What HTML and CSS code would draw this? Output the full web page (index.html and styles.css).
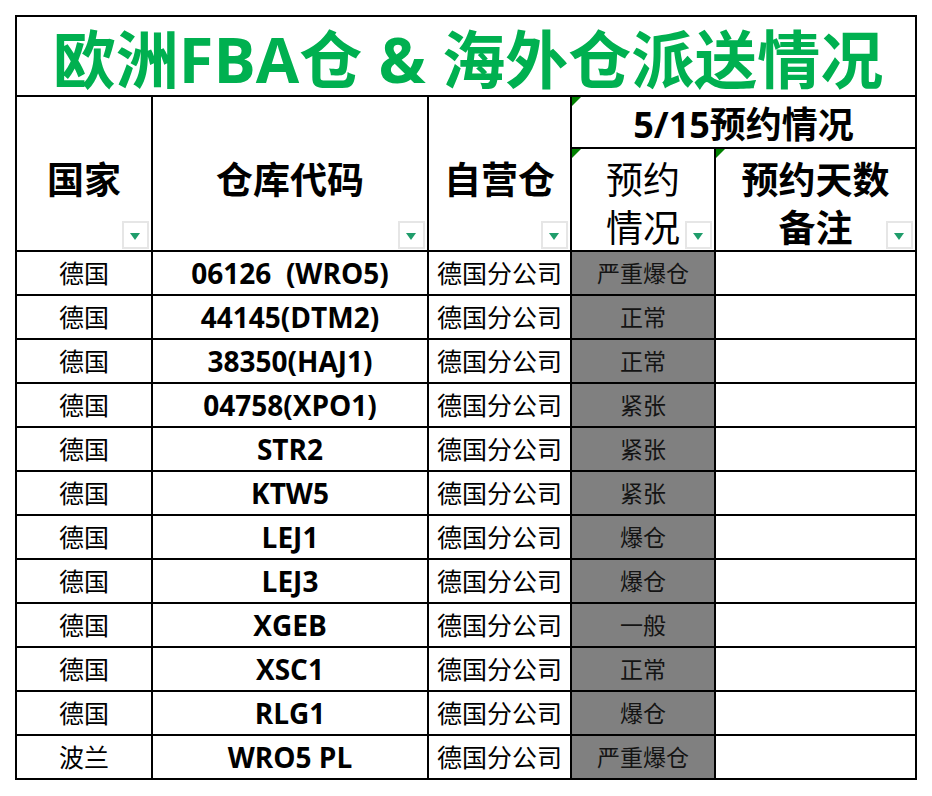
FILE: index.html
```html
<!DOCTYPE html>
<html lang="zh-CN">
<head>
<meta charset="utf-8">
<title>欧洲FBA仓 &amp; 海外仓派送情况</title>
<link rel="stylesheet" href="styles.css">
</head>
<body>
<div class="page">
  <div class="sheet">
    <div class="cell title">欧洲FBA仓 &amp; 海外仓派送情况</div>

    <div class="cell head span2">国家<span class="filter"></span></div>
    <div class="cell head span2">仓库代码<span class="filter"></span></div>
    <div class="cell head span2">自营仓<span class="filter"></span></div>
    <div class="cell head group mark">5/15预约情况</div>
    <div class="cell head sub regular mark">预约<br>情况<span class="filter"></span></div>
    <div class="cell head sub mark">预约天数<br>备注<span class="filter"></span></div>

    <div class="cell cn">德国</div><div class="cell code">06126&nbsp; (WRO5)</div><div class="cell cn">德国分公司</div><div class="cell status">严重爆仓</div><div class="cell"></div>
    <div class="cell cn">德国</div><div class="cell code">44145(DTM2)</div><div class="cell cn">德国分公司</div><div class="cell status">正常</div><div class="cell"></div>
    <div class="cell cn">德国</div><div class="cell code">38350(HAJ1)</div><div class="cell cn">德国分公司</div><div class="cell status">正常</div><div class="cell"></div>
    <div class="cell cn">德国</div><div class="cell code">04758(XPO1)</div><div class="cell cn">德国分公司</div><div class="cell status">紧张</div><div class="cell"></div>
    <div class="cell cn">德国</div><div class="cell code">STR2</div><div class="cell cn">德国分公司</div><div class="cell status">紧张</div><div class="cell"></div>
    <div class="cell cn">德国</div><div class="cell code">KTW5</div><div class="cell cn">德国分公司</div><div class="cell status">紧张</div><div class="cell"></div>
    <div class="cell cn">德国</div><div class="cell code">LEJ1</div><div class="cell cn">德国分公司</div><div class="cell status">爆仓</div><div class="cell"></div>
    <div class="cell cn">德国</div><div class="cell code">LEJ3</div><div class="cell cn">德国分公司</div><div class="cell status">爆仓</div><div class="cell"></div>
    <div class="cell cn">德国</div><div class="cell code">XGEB</div><div class="cell cn">德国分公司</div><div class="cell status">一般</div><div class="cell"></div>
    <div class="cell cn">德国</div><div class="cell code">XSC1</div><div class="cell cn">德国分公司</div><div class="cell status">正常</div><div class="cell"></div>
    <div class="cell cn">德国</div><div class="cell code">RLG1</div><div class="cell cn">德国分公司</div><div class="cell status">爆仓</div><div class="cell"></div>
    <div class="cell cn">波兰</div><div class="cell code">WRO5 PL</div><div class="cell cn">德国分公司</div><div class="cell status">严重爆仓</div><div class="cell"></div>
  </div>
</div>
</body>
</html>
```

FILE: styles.css
```css
html, body {
  margin: 0;
  padding: 0;
  background: #ffffff;
}

.page {
  padding: 15px 0 0 15px;
}

.sheet {
  display: grid;
  grid-template-columns: 134px 274px 141px 142px 199px;
  grid-template-rows: 78px 50px 101px repeat(12, 42px);
  gap: 2px;
  padding: 2px;
  background: #000000;
  width: max-content;
  font-family: "Open Sans", "Noto Sans CJK SC", sans-serif;
  color: #000000;
}

.cell {
  background: #ffffff;
  display: flex;
  align-items: center;
  justify-content: center;
  text-align: center;
  position: relative;
  white-space: nowrap;
  overflow: visible;
}

.title {
  grid-column: 1 / -1;
  color: #00b050;
  font-size: 63px;
  font-weight: 700;
  line-height: 1;
  padding-top: 5px;
  padding-left: 4px;
  box-sizing: border-box;
}

.head {
  font-size: 37px;
  font-weight: 700;
  line-height: 48px;
}

.span2 {
  grid-row: 2 / 4;
  padding-top: 12px;
  box-sizing: border-box;
}

.group {
  grid-column: 4 / 6;
  font-size: 36px;
  padding-top: 6px;
  box-sizing: border-box;
}

.sub {
  padding-top: 8px;
  box-sizing: border-box;
}

.regular {
  font-weight: 400;
}

.mark::before {
  content: "";
  position: absolute;
  left: 0;
  top: 0;
  width: 0;
  height: 0;
  border-top: 9px solid #008000;
  border-right: 9px solid transparent;
}

.filter {
  position: absolute;
  right: 2px;
  bottom: 1px;
  width: 27px;
  height: 28px;
  box-sizing: border-box;
  border: 2px solid #e6e6e6;
  background: #ffffff;
}

.filter::after {
  content: "";
  position: absolute;
  left: 6px;
  top: 10px;
  width: 0;
  height: 0;
  border-left: 5.5px solid transparent;
  border-right: 5.5px solid transparent;
  border-top: 7px solid #1f9d6b;
}

.cn {
  font-size: 25px;
  line-height: 1;
}

.code {
  font-size: 28px;
  font-weight: 700;
  line-height: 1;
}

.status {
  background: #808080;
  color: #141414;
  font-size: 23px;
  line-height: 1;
}
```
